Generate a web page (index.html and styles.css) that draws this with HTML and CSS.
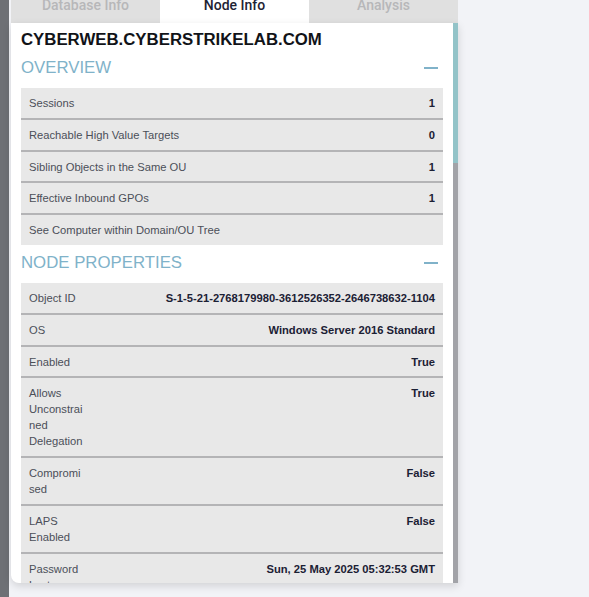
FILE: index.html
```html
<!DOCTYPE html>
<html>
<head>
<meta charset="utf-8">
<link rel="stylesheet" href="styles.css">
</head>
<body>
<div class="app">
  <div class="rail"></div>
  <div class="sidebar">
    <div class="tabs">
      <div class="tab">Database Info</div>
      <div class="tab active">Node Info</div>
      <div class="tab">Analysis</div>
    </div>
    <div class="panel">
      <div class="panel-content">
        <div class="title">CYBERWEB.CYBERSTRIKELAB.COM</div>
        <div class="section-head"><span>OVERVIEW</span><span class="minus"></span></div>
        <div class="table">
          <div class="row"><span class="label">Sessions</span><span class="value">1</span></div>
          <div class="row"><span class="label">Reachable High Value Targets</span><span class="value">0</span></div>
          <div class="row"><span class="label">Sibling Objects in the Same OU</span><span class="value">1</span></div>
          <div class="row"><span class="label">Effective Inbound GPOs</span><span class="value">1</span></div>
          <div class="row"><span class="label">See Computer within Domain/OU Tree</span><span class="value"></span></div>
        </div>
        <div class="section-head"><span>NODE PROPERTIES</span><span class="minus"></span></div>
        <div class="table props">
          <div class="row"><span class="label">Object ID</span><span class="value">S-1-5-21-2768179980-3612526352-2646738632-1104</span></div>
          <div class="row"><span class="label">OS</span><span class="value">Windows Server 2016 Standard</span></div>
          <div class="row"><span class="label">Enabled</span><span class="value">True</span></div>
          <div class="row"><span class="label">Allows Unconstrained Delegation</span><span class="value">True</span></div>
          <div class="row"><span class="label">Compromised</span><span class="value">False</span></div>
          <div class="row"><span class="label">LAPS Enabled</span><span class="value">False</span></div>
          <div class="row"><span class="label">Password Last Changed</span><span class="value">Sun, 25 May 2025 05:32:53 GMT</span></div>
          <div class="row"><span class="label">Last Logon (Replicated)</span><span class="value">Sun, 25 May 2025 05:33:10 GMT</span></div>
        </div>
      </div>
      <div class="scrollbar"><div class="thumb"></div><div class="track"></div></div>
    </div>
  </div>
</div>
</body>
</html>
```

FILE: styles.css
```css
html, body {
  margin: 0;
  padding: 0;
}
body {
  background: #f2f3f7;
  font-family: "Liberation Sans", Arial, sans-serif;
}
.app {
  display: flex;
  height: 597px;
  overflow: hidden;
}
.rail {
  width: 9px;
  flex: none;
  background: #6e7075;
}
.sidebar {
  width: 447px;
  margin-left: 2px;
  display: flex;
  flex-direction: column;
  flex: none;
}
.tabs {
  display: flex;
  height: 23px;
  overflow: hidden;
  flex: none;
}
.tab {
  flex: 1;
  background: #e0e0e0;
  text-align: center;
  font-family: Roboto, "Liberation Sans", sans-serif;
  font-size: 14px;
  font-weight: 500;
  line-height: 12px;
  margin-top: -1px;
  color: #b7b7b9;
}
.tab.active {
  background: #ffffff;
  color: #1e2334;
}
.panel {
  height: 560px;
  background: #ffffff;
  display: flex;
  border-bottom-left-radius: 8px;
  box-shadow: 0 3px 8px rgba(0, 0, 0, 0.14);
  overflow: hidden;
  flex: none;
}
.panel-content {
  flex: 1;
  padding: 0 10px;
  overflow: hidden;
}
.scrollbar {
  width: 5px;
  flex: none;
  display: flex;
  flex-direction: column;
}
.thumb {
  height: 140px;
  background: #93c3c8;
}
.track {
  flex: 1;
  background: #a2a3a8;
}
.title {
  padding-top: 7px;
  font-size: 16.8px;
  line-height: 20px;
  font-weight: 700;
  color: #111318;
}
.section-head {
  display: flex;
  justify-content: space-between;
  align-items: center;
  padding: 7px 0 9px;
  font-size: 16.8px;
  line-height: 22px;
  color: #80b2c9;
}
.minus {
  width: 14px;
  height: 2px;
  background: #80b2c9;
  margin-right: 5px;
}
.row {
  display: flex;
  justify-content: space-between;
  gap: 8px;
  padding: 7px 8px 6.8px;
  background: #e8e8e8;
  border-bottom: 2px solid #b4b4b6;
  font-size: 11.2px;
  line-height: 16px;
  color: #4b4f58;
}
.row:last-child {
  border-bottom: none;
}
.value {
  font-weight: 700;
  color: #1b2034;
  text-align: right;
}
.props .label {
  width: 55px;
  flex: none;
  overflow-wrap: break-word;
}
```
